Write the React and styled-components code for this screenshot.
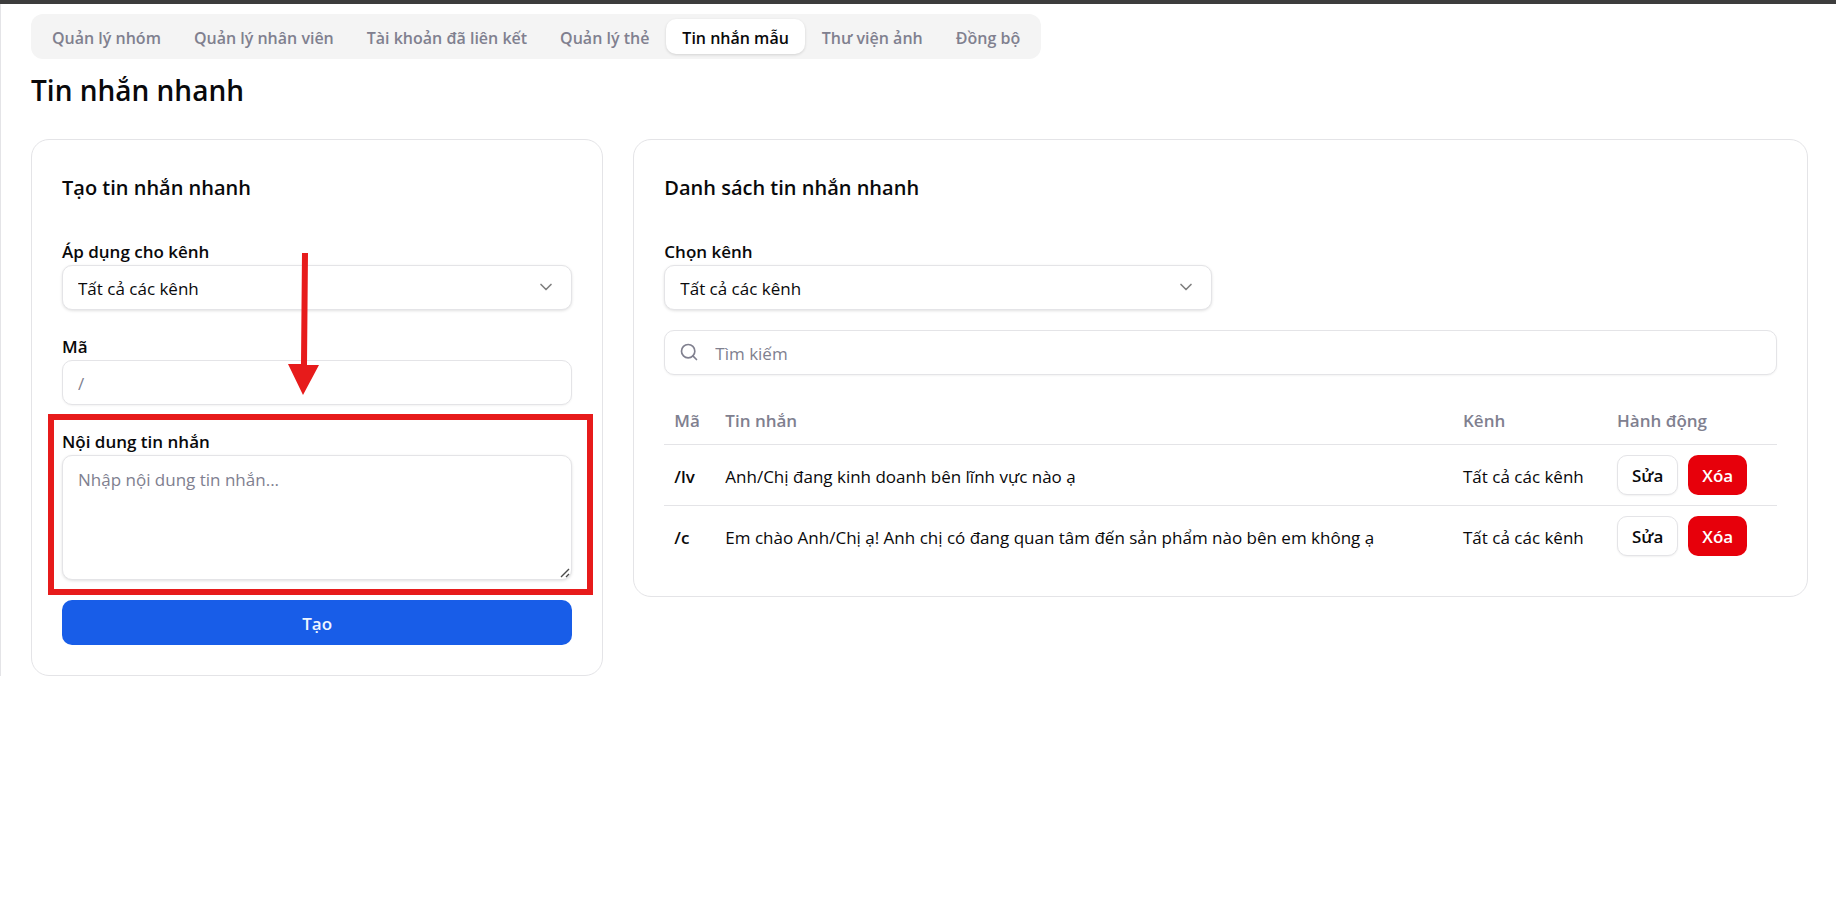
import React from "react";
import styled, { createGlobalStyle } from "styled-components";
import { ChevronDown, Search } from "lucide-react";

const c = {
  text: "#09090b",
  muted: "#80808f",
  border: "#e4e4e7",
  panel: "#f4f4f4",
  primary: "#185de8",
  danger: "#e7000b",
  mark: "#e71b1b",
};

const GlobalStyle = createGlobalStyle`
  *, *::before, *::after { box-sizing: border-box; }
  body {
    margin: 0;
    background: #fff;
    color: ${c.text};
    font-family: "Open Sans", "Noto Sans", sans-serif;
    font-size: 17px;
    line-height: 24px;
  }
  button, input, select, textarea { font: inherit; color: inherit; }
  h1, h2 { margin: 0; }
`;

const Page = styled.div`
  border-top: 4px solid #3d3d3d;
`;

const Content = styled.main`
  padding: 10px 28px 0 30px;
  border-left: 1px solid ${c.border};
`;

const TabList = styled.nav`
  display: inline-flex;
  gap: 1px;
  padding: 5px;
  border-radius: 12px;
  background: ${c.panel};
  vertical-align: top;
`;

const Tab = styled.button`
  height: 35px;
  padding: 2px 16px 0;
  border: 0;
  border-radius: 10px;
  font-size: 16px;
  font-weight: 600;
  white-space: nowrap;
  cursor: pointer;
  color: ${(p) => (p.$active ? c.text : c.muted)};
  background: ${(p) => (p.$active ? "#fff" : "transparent")};
  box-shadow: ${(p) => (p.$active ? "0 1px 3px rgba(0, 0, 0, 0.14)" : "none")};
`;

const PageTitle = styled.h1`
  margin: 11px 0 29px;
  font-size: 28px;
  font-weight: 600;
  line-height: 40px;
`;

const Columns = styled.div`
  display: grid;
  grid-template-columns: repeat(3, minmax(0, 1fr));
  gap: 30px;
  align-items: start;
`;

const Card = styled.section`
  grid-column: span ${(p) => p.$span};
  padding: 30px;
  border: 1px solid ${c.border};
  border-radius: 18px;
`;

const CardTitle = styled.h2`
  margin-bottom: 33px;
  font-size: 20px;
  font-weight: 600;
  line-height: 36px;
`;

const Form = styled.form`
  display: flex;
  flex-direction: column;
  gap: 24px;
`;

const Field = styled.div`
  position: relative;
  display: flex;
  flex-direction: column;
`;

const Label = styled.label`
  font-weight: 600;
  line-height: 26px;
`;

const SelectWrap = styled.div`
  position: relative;
  display: grid;

  svg {
    position: absolute;
    right: 16px;
    top: 12px;
    color: #808080;
    pointer-events: none;
  }
`;

const Select = styled.select`
  appearance: none;
  height: 45px;
  padding: 2px 40px 0 15px;
  border: 1px solid ${c.border};
  border-radius: 10px;
  background: #fff;
  box-shadow: 0 1px 3px rgba(0, 0, 0, 0.12);
`;

const Input = styled.input`
  width: 100%;
  height: 45px;
  padding: 2px 15px 0 ${(p) => (p.$withIcon ? 50 : 15)}px;
  border: 1px solid ${c.border};
  border-radius: 10px;
  background: #fff;
  box-shadow: 0 1px 2px rgba(0, 0, 0, 0.05);

  &::placeholder { color: ${c.muted}; opacity: 1; }
`;

const TextAreaWrap = styled.div`
  position: relative;
  display: grid;

  svg {
    position: absolute;
    right: 2px;
    bottom: 2px;
    pointer-events: none;
  }
`;

const TextArea = styled.textarea`
  height: 125px;
  padding: 12px 15px;
  border: 1px solid ${c.border};
  border-radius: 10px;
  background: #fff;
  box-shadow: 0 1px 3px rgba(0, 0, 0, 0.12);
  resize: vertical;

  &::placeholder { color: ${c.muted}; opacity: 1; }
  &::-webkit-resizer { background: transparent; }
`;

const Submit = styled.button`
  height: 45px;
  margin-top: -4px;
  padding: 2px 15px 0;
  border: 0;
  border-radius: 10px;
  background: ${c.primary};
  color: #eff6ff;
  font-weight: 600;
  cursor: pointer;
`;

const Filters = styled.div`
  display: grid;
  grid-template-columns: 1fr 1fr;
  gap: 18px;
  margin-bottom: 20px;
`;

const SearchBox = styled.div`
  position: relative;
  margin-bottom: 24px;

  svg {
    position: absolute;
    left: 15px;
    top: 12px;
    color: ${c.muted};
  }
`;

const Table = styled.table`
  width: 100%;
  border-collapse: collapse;
  table-layout: fixed;

  th, td { padding: 0 10px; text-align: left; }
  th { height: 45px; color: ${c.muted}; font-weight: 600; }
  td { height: 61px; padding-top: 4px; }
  td:last-child { padding-top: 0; }
  thead tr, tbody tr:not(:last-child) { border-bottom: 1px solid ${c.border}; }
`;

const Col = styled.col`
  width: ${(p) => p.$width};
`;

const Code = styled.td`
  font-weight: 600;
`;

const Actions = styled.div`
  display: flex;
  gap: 10px;
`;

const RowButton = styled.button`
  height: 40px;
  padding: 3px 14px 0;
  border: ${(p) => (p.$danger ? "0" : `1px solid ${c.border}`)};
  border-radius: 10px;
  background: ${(p) => (p.$danger ? c.danger : "#fff")};
  color: ${(p) => (p.$danger ? "#fff" : c.text)};
  box-shadow: ${(p) => (p.$danger ? "none" : "0 1px 2px rgba(0, 0, 0, 0.06)")};
  font-weight: 600;
  cursor: pointer;
`;

const Highlight = styled.div`
  position: absolute;
  inset: -15px -21px -15px -14px;
  border: 6px solid ${c.mark};
  pointer-events: none;
`;

const Arrow = styled.svg`
  position: absolute;
  left: 50%;
  bottom: calc(100% + 34px);
  width: 32px;
  height: 142px;
  margin-left: -29px;
  z-index: 1;
  pointer-events: none;
`;

const tabs = [
  "Quản lý nhóm",
  "Quản lý nhân viên",
  "Tài khoản đã liên kết",
  "Quản lý thẻ",
  "Tin nhắn mẫu",
  "Thư viện ảnh",
  "Đồng bộ",
];

const messages = [
  { code: "/lv", text: "Anh/Chị đang kinh doanh bên lĩnh vực nào ạ", channel: "Tất cả các kênh" },
  {
    code: "/c",
    text: "Em chào Anh/Chị ạ! Anh chị có đang quan tâm đến sản phẩm nào bên em không ạ",
    channel: "Tất cả các kênh",
  },
];

function ChannelSelect({ id, label }) {
  return (
    <Field>
      <Label htmlFor={id}>{label}</Label>
      <SelectWrap>
        <Select id={id}>
          <option>Tất cả các kênh</option>
        </Select>
        <ChevronDown size={20} strokeWidth={2} />
      </SelectWrap>
    </Field>
  );
}

export default function App() {
  return (
    <Page>
      <GlobalStyle />
      <Content>
        <TabList>
          {tabs.map((t) => (
            <Tab key={t} type="button" $active={t === "Tin nhắn mẫu"}>
              {t}
            </Tab>
          ))}
        </TabList>
        <PageTitle>Tin nhắn nhanh</PageTitle>
        <Columns>
          <Card $span={1}>
            <CardTitle>Tạo tin nhắn nhanh</CardTitle>
            <Form onSubmit={(e) => e.preventDefault()}>
              <ChannelSelect id="apply-channel" label="Áp dụng cho kênh" />
              <Field>
                <Label htmlFor="code">Mã</Label>
                <Input id="code" placeholder="/" />
              </Field>
              <Field>
                <Label htmlFor="body">Nội dung tin nhắn</Label>
                <TextAreaWrap>
                  <TextArea id="body" placeholder="Nhập nội dung tin nhắn..." />
                  <svg width="10" height="10" viewBox="0 0 10 10" aria-hidden="true">
                    <path d="M1 9 9 1M6 9l3-3" stroke="#4a4a4a" strokeWidth="1.400" />
                  </svg>
                </TextAreaWrap>
                <Highlight />
                <Arrow viewBox="0 0 32 142" aria-hidden="true">
                  <path d="M14 0h6l-1 112h12L15 142 0 111h13z" fill={c.mark} />
                </Arrow>
              </Field>
              <Submit type="submit">Tạo</Submit>
            </Form>
          </Card>
          <Card $span={2}>
            <CardTitle>Danh sách tin nhắn nhanh</CardTitle>
            <Filters>
              <ChannelSelect id="filter-channel" label="Chọn kênh" />
            </Filters>
            <SearchBox>
              <Input type="search" aria-label="Tìm kiếm" placeholder="Tìm kiếm" $withIcon />
              <Search size={20} strokeWidth={2} />
            </SearchBox>
            <Table>
              <colgroup>
                <Col $width="51px" />
                <Col $width="auto" />
                <Col $width="154px" />
                <Col $width="170px" />
              </colgroup>
              <thead>
                <tr>
                  <th>Mã</th>
                  <th>Tin nhắn</th>
                  <th>Kênh</th>
                  <th>Hành động</th>
                </tr>
              </thead>
              <tbody>
                {messages.map((m) => (
                  <tr key={m.code}>
                    <Code>{m.code}</Code>
                    <td>{m.text}</td>
                    <td>{m.channel}</td>
                    <td>
                      <Actions>
                        <RowButton type="button">Sửa</RowButton>
                        <RowButton type="button" $danger>
                          Xóa
                        </RowButton>
                      </Actions>
                    </td>
                  </tr>
                ))}
              </tbody>
            </Table>
          </Card>
        </Columns>
      </Content>
    </Page>
  );
}
